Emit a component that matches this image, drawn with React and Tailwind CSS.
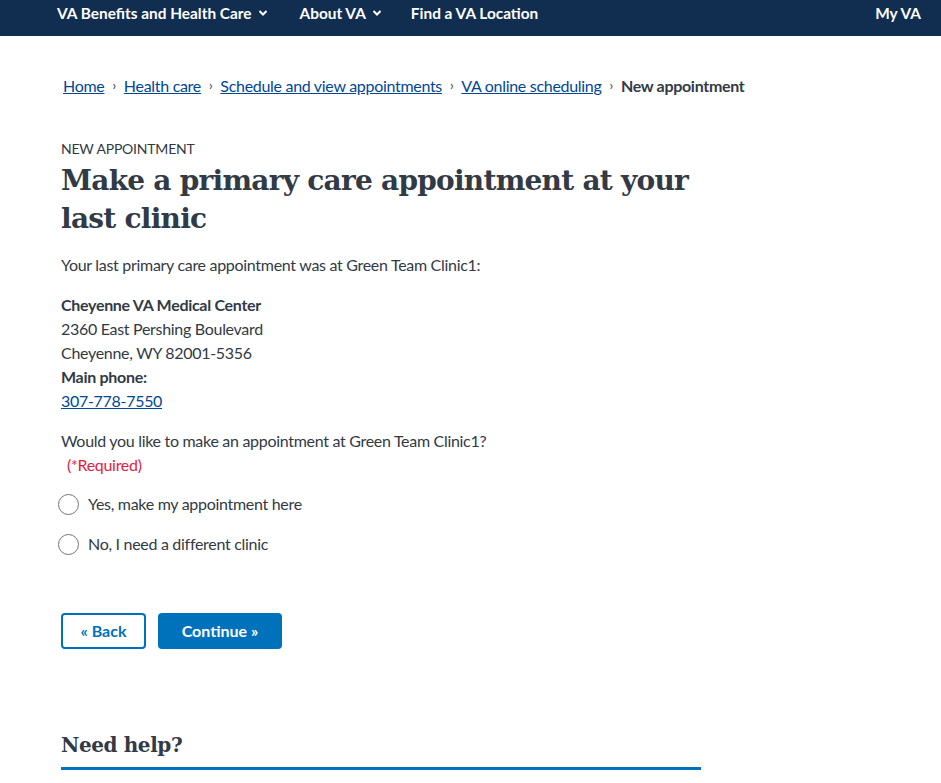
import React from "react";

const sans = "font-['Lato','Liberation_Sans',sans-serif]";
const serif = "font-['DejaVu_Serif','Liberation_Serif',serif]";

function Chevron() {
  return (
    <svg width="10" height="8" viewBox="0 0 10 8" className="ml-[6px]">
      <path d="M1.5 2 L5 5.5 L8.5 2" stroke="white" strokeWidth="2" fill="none" />
    </svg>
  );
}

function Radio({ label }) {
  return (
    <label className="flex items-center gap-[9px] h-[24px] ml-[-3px]">
      <span className="w-[21px] h-[21px] rounded-full border border-[#71767a] bg-white shrink-0" />
      <span>{label}</span>
    </label>
  );
}

export default function App() {
  return (
    <div className={`${sans} text-[#323a45] bg-white min-h-[783px] tracking-[-0.3px]`}>
      <nav className="h-[36px] bg-[#112e51] flex items-start pt-[3px] leading-[20px] text-white font-bold text-[15.4px] pl-[57px] pr-[20px] tracking-normal">
        <div className="flex items-center">VA Benefits and Health Care<Chevron /></div>
        <div className="flex items-center ml-[32px]">About VA<Chevron /></div>
        <div className="ml-[29px]">Find a VA Location</div>
        <div className="ml-auto">My VA</div>
      </nav>

      <div className="pl-[61px]">
        <div className="pt-[40px] flex items-center text-[16px] h-[60px] pl-[2px]">
          <a className="text-[#004795] underline">Home</a>
          <span className="mx-[8px] text-[13px]">›</span>
          <a className="text-[#004795] underline">Health care</a>
          <span className="mx-[8px] text-[13px]">›</span>
          <a className="text-[#004795] underline">Schedule and view appointments</a>
          <span className="mx-[8px] text-[13px]">›</span>
          <a className="text-[#004795] underline">VA online scheduling</a>
          <span className="mx-[8px] text-[13px]">›</span>
          <span className="font-bold">New appointment</span>
        </div>

        <div className="w-[640px]">
          <div className="mt-[44px] text-[14px] leading-[18px] tracking-[-0.2px]">NEW APPOINTMENT</div>
          <h1 className={`${serif} font-bold text-[28px] leading-[38px] mt-[4px] text-[#323a45] tracking-[-0.75px]`}>
            Make a primary care appointment at your last clinic
          </h1>
          <p className="mt-[15px] text-[16px] leading-[24px]">
            Your last primary care appointment was at Green Team Clinic1:
          </p>
          <div className="mt-[16px] text-[16px] leading-[24px]">
            <div className="font-bold">Cheyenne VA Medical Center</div>
            <div>2360 East Pershing Boulevard</div>
            <div>Cheyenne, WY 82001-5356</div>
            <div className="font-bold">Main phone:</div>
            <a className="text-[#004795] underline">307-778-7550</a>
          </div>
          <div className="mt-[16px] text-[16px] leading-[24px]">
            Would you like to make an appointment at Green Team Clinic1?
          </div>
          <div className="text-[#e31c3d] text-[16px] leading-[24px] pl-[6px]">(*Required)</div>
          <div className="mt-[15px] flex flex-col gap-[16px] text-[16px]">
            <Radio label="Yes, make my appointment here" />
            <Radio label="No, I need a different clinic" />
          </div>
          <div className="mt-[57px] flex gap-[12px] tracking-normal">
            <button className="w-[85px] h-[36px] rounded-[4px] border-2 border-[#0071bb] text-[#0071bb] font-bold text-[16px] bg-white">
              « Back
            </button>
            <button className="w-[124px] h-[36px] rounded-[4px] bg-[#0071bb] text-white font-bold text-[16px]">
              Continue »
            </button>
          </div>
          <div className="mt-[82px] border-b-[3px] border-[#0071bb] pb-[8px]">
            <h2 className={`${serif} font-bold text-[20px] leading-[28px] tracking-[-0.4px]`}>Need help?</h2>
          </div>
        </div>
      </div>
    </div>
  );
}
